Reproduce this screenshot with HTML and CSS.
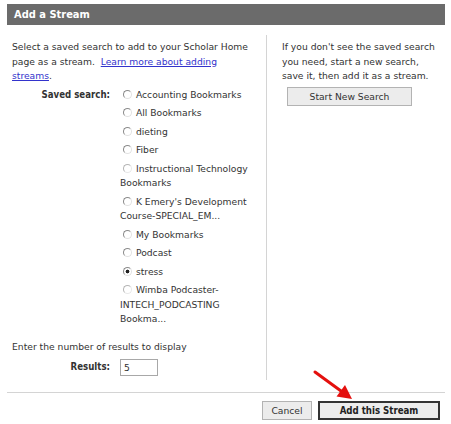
FILE: index.html
```html
<!DOCTYPE html>
<html lang="en">

<head>
	<meta charset="UTF-8">
	<meta name="viewport" content="width=device-width, initial-scale=1.0">
	<title>Add a Stream</title>
	<link rel="stylesheet" href="styles.css">
</head>

<body>
	<div class="dialog">
		<div class="dialog-title">Add a Stream</div>

		<div class="dialog-body">
			<div class="col-main">
				<p class="intro">Select a saved search to add to your Scholar Home page as a stream.&nbsp; <a href="#">Learn more about adding streams</a>.</p>

				<div class="field field-search">
					<span class="field-label">Saved search:</span>
					<ul class="search-list">
						<li><input type="radio" name="search"> Accounting Bookmarks</li>
						<li><input type="radio" name="search"> All Bookmarks</li>
						<li><input type="radio" name="search"> dieting</li>
						<li><input type="radio" name="search"> Fiber</li>
						<li><input type="radio" name="search" class="faint"> Instructional Technology Bookmarks</li>
						<li><input type="radio" name="search"> K Emery's Development Course-SPECIAL_EM...</li>
						<li><input type="radio" name="search"> My Bookmarks</li>
						<li><input type="radio" name="search"> Podcast</li>
						<li><input type="radio" name="search" checked> stress</li>
						<li><input type="radio" name="search" class="faint"> Wimba Podcaster-INTECH_PODCASTING Bookma...</li>
					</ul>
				</div>

				<p class="results-note">Enter the number of results to display</p>
				<div class="field field-results">
					<label class="field-label" for="results">Results:</label>
					<input id="results" class="results-input" type="text" value="5">
				</div>
			</div>

			<div class="col-side">
				<p class="side-note">If you don't see the saved search you need, start a new search, save it, then add it as a stream.</p>
				<button class="btn btn-search">Start New Search</button>
			</div>
		</div>

		<div class="dialog-footer">
			<button class="btn btn-cancel">Cancel</button>
			<button class="btn btn-primary">Add this Stream</button>
		</div>

		<!-- red pointer arrow drawn over the dialog -->
		<svg class="pointer-arrow" width="451" height="424" viewBox="0 0 451 424">
			<line x1="315" y1="372" x2="341" y2="391" stroke="#e4100e" stroke-width="3" stroke-linecap="round" />
			<polygon points="352,399 336.5,396.5 345,385" fill="#e4100e" />
		</svg>
	</div>
</body>

</html>
```

FILE: styles.css
```css
*,
*::before,
*::after {
	box-sizing: border-box;
}

body {
	margin: 0;
	font-family: "DejaVu Sans", Verdana, sans-serif;
	font-size: 9.2px;
	color: #333;
	background: #fff;
}

.dialog {
	position: relative;
	width: 445px;
	padding: 4px 0 0 7px;
}

.dialog-title {
	height: 21px;
	line-height: 21px;
	padding-left: 7px;
	background: #6b6b6b;
	color: #fff;
	font-family: "DejaVu Sans Condensed", "DejaVu Sans", sans-serif;
	font-weight: bold;
	font-size: 11px;
}

.dialog-body {
	display: flex;
	margin-top: 10px;
	height: 345px;
}

.col-main {
	width: 259px;
	padding: 5px 0 0 5px;
}

.col-side {
	flex: 1;
	border-left: 1px solid #d4d4d4;
	padding: 5px 0 0 15px;
}

p {
	margin: 0;
	line-height: 14.5px;
}

.intro {
	width: 240px;
}

.side-note {
	width: 155px;
}

a {
	color: #3333cc;
}

.field {
	display: grid;
	grid-template-columns: 98px 1fr;
	column-gap: 10px;
}

.field-label {
	text-align: right;
	font-family: "DejaVu Sans Condensed", "DejaVu Sans", sans-serif;
	font-weight: bold;
	font-size: 9.6px;
	line-height: 14.5px;
}

.field-search {
	margin-top: 4px;
}

.search-list {
	list-style: none;
	margin: 0;
	padding: 0;
	width: 134px;
	line-height: 14.5px;
}

.search-list li {
	margin-bottom: 4px;
}

.search-list li:last-child {
	margin-bottom: 0;
}

input[type="radio"] {
	appearance: none;
	-webkit-appearance: none;
	width: 9px;
	height: 9px;
	margin: 0 1px 0 3px;
	vertical-align: -1px;
	border: 1px solid;
	border-color: #8a8a8a #e2e2e2 #e2e2e2 #8a8a8a;
	border-radius: 50%;
	background: #fff;
}

input[type="radio"].faint {
	border-color: #b5b5b5 #e8e8e8 #e8e8e8 #b5b5b5;
}

input[type="radio"]:checked {
	background: radial-gradient(circle, #222 0 1.6px, #fff 2.2px);
}

.results-note {
	margin-top: 13px;
}

.field-results {
	margin-top: 5px;
	align-items: center;
}

.results-input {
	width: 38px;
	height: 17px;
	padding: 0 3px;
	border: 1px solid #a8a8a8;
	font: inherit;
	color: #333;
}

.btn {
	height: 19px;
	padding: 0;
	border: 1px solid #b3b3b3;
	background: #ececec;
	font-family: inherit;
	font-size: 9.2px;
	color: #333;
	cursor: pointer;
}

.btn-search {
	width: 125px;
	margin: 3px 0 0 5px;
}

.dialog-footer {
	display: flex;
	justify-content: flex-end;
	gap: 6px;
	margin-top: 12px;
	padding: 8px 5px 0 0;
	border-top: 1px solid #d4d4d4;
}

.btn-cancel {
	width: 50px;
}

.btn-primary {
	width: 122px;
	border: 2px solid #333;
	font-family: "DejaVu Sans Condensed", "DejaVu Sans", sans-serif;
	font-weight: bold;
	font-size: 9.6px;
	color: #222;
}

.pointer-arrow {
	position: absolute;
	left: 0;
	top: 0;
	pointer-events: none;
}
```
